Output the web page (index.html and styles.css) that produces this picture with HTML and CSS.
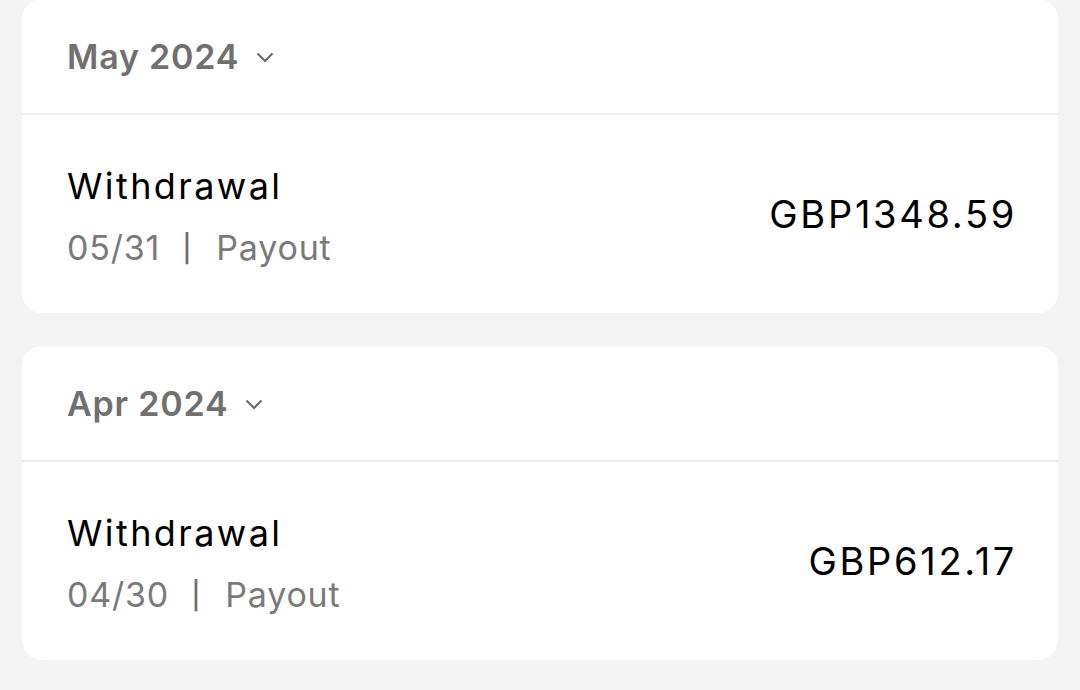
FILE: index.html
```html
<!DOCTYPE html>
<html lang="en">
<head>
    <meta charset="UTF-8">
    <meta name="viewport" content="width=device-width, initial-scale=1.0">
    <title>Transactions</title>
    <link rel="stylesheet" href="styles.css">
</head>
<body>

    <div class="month-list">
        <!-- May -->
        <div class="month-card">
            <div class="month-header">
                <span class="month-title">May 2024</span>
                <svg class="chevron" viewBox="0 0 18 11" width="18" height="11"><path d="M1.5 1.5 L9 9 L16.5 1.5" /></svg>
            </div>
            <div class="tx-row">
                <div class="tx-info">
                    <div class="tx-title">Withdrawal</div>
                    <div class="tx-meta">05/31<span class="sep">|</span>Payout</div>
                </div>
                <div class="tx-amount">GBP1348.59</div>
            </div>
        </div>

        <!-- April -->
        <div class="month-card">
            <div class="month-header">
                <span class="month-title">Apr 2024</span>
                <svg class="chevron" viewBox="0 0 18 11" width="18" height="11"><path d="M1.5 1.5 L9 9 L16.5 1.5" /></svg>
            </div>
            <div class="tx-row">
                <div class="tx-info">
                    <div class="tx-title">Withdrawal</div>
                    <div class="tx-meta">04/30<span class="sep">|</span>Payout</div>
                </div>
                <div class="tx-amount">GBP612.17</div>
            </div>
        </div>
    </div>

</body>
</html>
```

FILE: styles.css
```css
body {
    margin: 0;
    font-family: 'Inter', 'Roboto', sans-serif;
    background-color: #F4F4F4;
    color: #000;
    height: 100vh;
    overflow: hidden;
}

.month-list {
    display: flex;
    flex-direction: column;
    gap: 33px;
    padding: 0 22px;
    margin-top: -1px;
}

.month-card {
    background-color: #FFFFFF;
    border-radius: 20px;
}

/* Header */
.month-header {
    height: 114px;
    display: flex;
    align-items: center;
    gap: 17px;
    padding-left: 45px;
    border-bottom: 2px solid #EDEDED;
}

.month-title {
    font-size: 34px;
    font-weight: 600;
    letter-spacing: 0.8px;
    color: #707070;
}

.chevron {
    fill: none;
    stroke: #6A6A6A;
    stroke-width: 2;
    margin-top: 2px;
}

/* Transaction row */
.tx-row {
    height: 198px;
    display: flex;
    align-items: center;
    justify-content: space-between;
    padding: 0 41px 0 45px;
}

.tx-info {
    padding-top: 6px;
}

.tx-title {
    font-size: 36px;
    letter-spacing: 2.4px;
    line-height: 61px;
    color: #000;
}

.tx-meta {
    font-size: 34px;
    letter-spacing: 0.8px;
    line-height: 61px;
    color: #7A7A7A;
}

.sep {
    font-size: 27px;
    font-weight: 500;
    color: #6E6E6E;
    vertical-align: 2px;
    margin: 0 24px 0 22px;
}

.tx-amount {
    font-size: 38px;
    letter-spacing: 2.7px;
    color: #000;
}
```
